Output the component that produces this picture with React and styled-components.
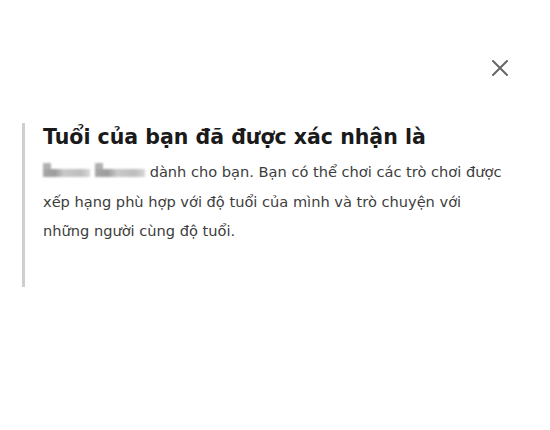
import React from 'react';
import styled, { createGlobalStyle } from 'styled-components';

const GlobalStyle = createGlobalStyle`
  html, body {
    margin: 0;
    padding: 0;
    background: #ffffff;
  }
  body {
    font-family: "DejaVu Sans", "Noto Sans", sans-serif;
  }
`;

const Page = styled.div`
  width: 550px;
  height: 430px;
  box-sizing: border-box;
  padding: 56px 38px 0 22px;
  display: flex;
  flex-direction: column;
  overflow: hidden;
`;

const TopBar = styled.div`
  display: flex;
  justify-content: flex-end;
  height: 24px;
`;

const CloseButton = styled.button`
  width: 24px;
  height: 24px;
  padding: 0;
  border: none;
  background: transparent;
  display: flex;
  align-items: center;
  justify-content: center;
  cursor: pointer;
`;

const Panel = styled.section`
  margin-top: 43px;
  min-height: 164px;
  border-left: 3px solid #cfcfcf;
  padding-left: 18px;
  display: flex;
  flex-direction: column;
`;

const Title = styled.h1`
  margin: 0;
  font-size: 20.5px;
  line-height: 28px;
  font-weight: 700;
  color: #1a1a1a;
`;

const Body = styled.p`
  margin: 6px 0 0;
  max-width: 476px;
  font-size: 14.6px;
  line-height: 29.5px;
  color: #3d3d3d;
`;

const Hidden = styled.span`
  position: relative;
  display: inline-block;
  width: ${({ $w }) => $w}px;
  height: 8px;
  margin-right: ${({ $gap }) => $gap}px;
  background: linear-gradient(90deg, #a8a8a8 0%, #9c9c9c 25%, #c9c9c9 45%, #bdbdbd 80%, #d8d8d8 100%);
  filter: blur(1px);
  vertical-align: 0;

  &::before {
    content: '';
    position: absolute;
    left: 0;
    top: -6px;
    width: 8px;
    height: 6px;
    background: #b0b0b0;
  }
`;

const CloseIcon = () => (
  <svg width="18" height="18" viewBox="0 0 18 18" fill="none">
    <path d="M2 2L16 16M16 2L2 16" stroke="#666666" strokeWidth="2" strokeLinecap="round" />
  </svg>
);

export default function App() {
  return (
    <>
      <GlobalStyle />
      <Page>
        <TopBar>
          <CloseButton aria-label="Đóng">
            <CloseIcon />
          </CloseButton>
        </TopBar>
        <Panel>
          <Title>Tuổi của bạn đã được xác nhận là</Title>
          <Body>
            <Hidden $w={47} $gap={5} />
            <Hidden $w={50} $gap={0} /> dành cho bạn. Bạn có thể chơi các trò chơi được
            xếp hạng phù hợp với độ tuổi của mình và trò chuyện với những người cùng độ tuổi.
          </Body>
        </Panel>
      </Page>
    </>
  );
}
